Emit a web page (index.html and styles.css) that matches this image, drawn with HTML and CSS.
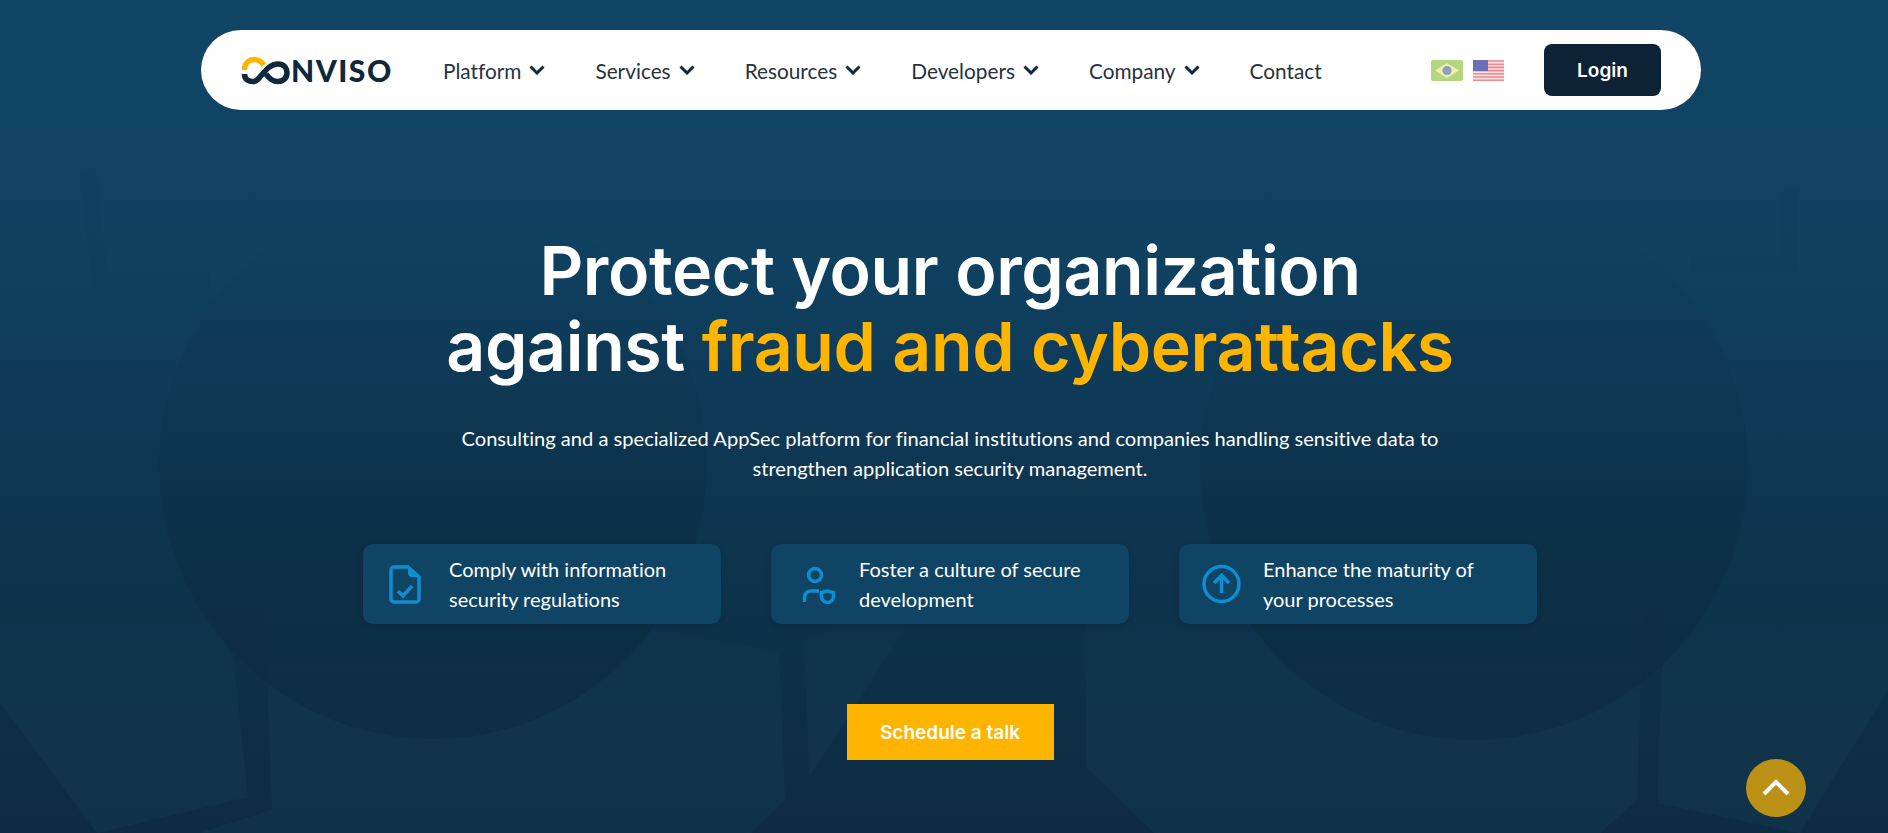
FILE: index.html
```html
<!DOCTYPE html>
<html>
<head>
    <title>Conviso</title>
    <link rel="stylesheet" href="styles.css">
</head>
<body>
    <section class="hero">
        <!-- faint infinity shape behind the hero -->
        <svg class="hero-bg" viewBox="0 0 1888 833" width="1888" height="833">
            <defs>
                <linearGradient id="fade" gradientUnits="userSpaceOnUse" x1="0" y1="190" x2="0" y2="740">
                    <stop offset="0" stop-color="#0b2a40" stop-opacity="0"/>
                    <stop offset="0.35" stop-color="#0b2a40" stop-opacity="0.14"/>
                    <stop offset="1" stop-color="#0b2a40" stop-opacity="0.62"/>
                </linearGradient>
                <linearGradient id="plate" gradientUnits="userSpaceOnUse" x1="0" y1="590" x2="0" y2="720">
                    <stop offset="0" stop-color="#153c54" stop-opacity="0"/>
                    <stop offset="1" stop-color="#153c54" stop-opacity="0.4"/>
                </linearGradient>
            </defs>
            <!-- lighter plates low on the page -->
            <g fill="url(#plate)">
                <path d="M0 590H194L233 657 248 797 97 833 0 703z"/>
                <path d="M264 590H645V627L779 652 785 800 751 833H200L272 810z"/>
                <path d="M805 640 930 590 809 777z"/>
                <path d="M1086 590H1644L1637 800 1600 833H1154L1086 767z"/>
                <path d="M1665 590H1888V690L1800 833 1657 803z"/>
            </g>
            <!-- faint frames near the top corners -->
            <g fill="none" stroke="#0b2a40" stroke-opacity="0.05" stroke-width="16">
                <path d="M88 170 100 280H210"/>
                <path d="M1790 190V265H1690"/>
            </g>
            <circle cx="433" cy="465" r="274" fill="url(#fade)"/>
            <circle cx="1474" cy="466" r="274" fill="url(#fade)"/>
        </svg>

        <header class="navbar">
            <a class="logo" href="#">
                <svg width="50" height="30" viewBox="0 0 50 30">
                    <path d="M3.500 15C3.500 7 9 4.500 13 4.500 17 4.500 20 6 23 10" fill="none" stroke="#ffb400" stroke-width="5.500"/>
                    <path d="M3.500 19C3.500 25 8 26.500 12 26.500 20 26.500 24 9 37 9 44 9 46 14 46 18 46 24 41 26.500 37 26.500 30 26.500 27 22 25 19" fill="none" stroke="#11283b" stroke-width="5.500"/>
                </svg>
                <span class="logo-text">nviso</span>
            </a>
            <nav class="menu">
                <a href="#">Platform <svg class="chev" viewBox="0 0 16 10"><path d="M1.500 1.500 8 8l6.500-6.500"/></svg></a>
                <a href="#">Services <svg class="chev" viewBox="0 0 16 10"><path d="M1.500 1.500 8 8l6.500-6.500"/></svg></a>
                <a href="#">Resources <svg class="chev" viewBox="0 0 16 10"><path d="M1.500 1.500 8 8l6.500-6.500"/></svg></a>
                <a href="#">Developers <svg class="chev" viewBox="0 0 16 10"><path d="M1.500 1.500 8 8l6.500-6.500"/></svg></a>
                <a href="#">Company <svg class="chev" viewBox="0 0 16 10"><path d="M1.500 1.500 8 8l6.500-6.500"/></svg></a>
                <a href="#">Contact</a>
            </nav>
            <div class="flags">
                <svg width="32" height="21" viewBox="0 0 32 21">
                    <rect width="32" height="21" rx="2" fill="#b2d77f"/>
                    <path d="M16 3 28 10.500 16 18 4 10.500z" fill="#f3ecb0"/>
                    <circle cx="16" cy="10.500" r="4.600" fill="#8fa0bd"/>
                </svg>
                <svg width="31" height="21" viewBox="0 0 31 21">
                    <rect width="31" height="21" fill="#fbe3e4"/>
                    <path d="M0 1h31M0 4.200h31M0 7.400h31M0 10.600h31M0 13.800h31M0 17h31M0 20.200h31" stroke="#f0878f" stroke-width="1.600"/>
                    <rect width="15" height="11" fill="#6b6fb5"/>
                </svg>
            </div>
            <a class="login" href="#">Login</a>
        </header>

        <div class="hero-body">
            <h1>Protect your organization<br>against <span class="accent">fraud and cyberattacks</span></h1>
            <p class="lead">Consulting and a specialized AppSec platform for financial institutions and companies handling sensitive data to strengthen application security management.</p>
            <div class="cards">
                <div class="card">
                    <svg class="card-icon" width="41" height="40" viewBox="0 0 41 40">
                        <path d="M8 3h14l11 10v22a3 3 0 0 1-3 3H8a3 3 0 0 1-3-3V6a3 3 0 0 1 3-3z"/>
                        <path class="solid" d="M22 2v7a4 4 0 0 0 4 4h8z"/>
                        <path d="M12 27l5 5 9-10"/>
                    </svg>
                    <span>Comply with information<br>security regulations</span>
                </div>
                <div class="card">
                    <svg class="card-icon" width="43" height="40" viewBox="0 0 43 40">
                        <circle cx="21" cy="11" r="6.500"/>
                        <path d="M10.500 38V33a6 6 0 0 1 6-6H25"/>
                        <path d="M27.500 28.500l6-1.500 6 1.500v4c0 3.500-3 5.500-6 6.500-3-1-6-3-6-6.500z"/>
                    </svg>
                    <span>Foster a culture of secure<br>development</span>
                </div>
                <div class="card">
                    <svg class="card-icon" width="39" height="40" viewBox="0 0 39 40">
                        <circle cx="19.500" cy="20" r="17.500"/>
                        <path d="M19.500 29V12M12 19l7.500-7.500L27 19"/>
                    </svg>
                    <span>Enhance the maturity of<br>your processes</span>
                </div>
            </div>
            <a class="cta" href="#">Schedule a talk</a>
        </div>

        <a class="to-top" href="#">
            <svg width="30" height="18" viewBox="0 0 30 18"><path d="M3 15 15 3l12 12"/></svg>
        </a>
    </section>
</body>
</html>
```

FILE: styles.css
```css
* {
    box-sizing: border-box;
}

body {
    margin: 0;
    font-family: Lato, "Open Sans", sans-serif;
    font-variant-ligatures: none;
    background: #0d2b40;
}

a {
    text-decoration: none;
}

.hero {
    position: relative;
    height: 833px;
    overflow: hidden;
    padding-top: 30px;
    background: linear-gradient(180deg, #0f4566 0%, #0f4161 30%, #0e3550 60%, #0d2c41 100%);
}

.hero-bg {
    position: absolute;
    top: 0;
    left: 0;
}

.navbar {
    position: relative;
    display: flex;
    align-items: center;
    width: 1500px;
    height: 80px;
    margin-left: 201px;
    padding: 0 40px;
    background: #fff;
    border-radius: 40px;
}

.logo {
    display: flex;
    align-items: center;
    width: 202px;
    color: #11283b;
}

.logo svg {
    flex: none;
}

.logo-text {
    font-size: 30px;
    font-weight: 900;
    letter-spacing: 1.500px;
    text-transform: uppercase;
}

.menu {
    display: flex;
    gap: 50px;
    font-size: 20.800px;
}

.menu a {
    display: flex;
    align-items: center;
    gap: 8px;
    color: #26333f;
}

.chev {
    width: 16px;
    height: 10px;
    fill: none;
    stroke: #11283b;
    stroke-width: 3;
}

.flags {
    display: flex;
    align-items: center;
    gap: 10px;
    margin-left: auto;
    margin-right: 40px;
}

.login {
    display: flex;
    align-items: center;
    justify-content: center;
    width: 117px;
    height: 52px;
    color: #fff;
    font-family: Inter, sans-serif;
    font-size: 19px;
    font-weight: 600;
    background: #0d2335;
    border-radius: 8px;
}

.hero-body {
    position: relative;
    display: flex;
    flex-direction: column;
    align-items: center;
    width: 1500px;
    margin-top: 122px;
    margin-left: 200px;
    color: #fff;
    text-align: center;
}

h1 {
    margin: 0;
    font-family: Inter, sans-serif;
    font-size: 68px;
    font-weight: 600;
    line-height: 76px;
    letter-spacing: -0.400px;
}

.accent {
    color: #ffb400;
}

.lead {
    width: 1000px;
    margin: 39px 0 0;
    font-size: 20.100px;
    line-height: 30px;
}

.cards {
    display: flex;
    gap: 50px;
    margin-top: 61px;
}

.card {
    display: flex;
    align-items: center;
    gap: 22px;
    width: 358px;
    height: 80px;
    padding-left: 23px;
    font-size: 20px;
    line-height: 30px;
    text-align: left;
    background: #0f4464;
    border-radius: 10px;
    box-shadow: 0 2px 6px rgba(0, 0, 0, 0.12);
}

.card-icon {
    flex: none;
    fill: none;
    stroke: #0e8ed0;
    stroke-width: 3.500;
}

.card-icon .solid {
    fill: #0e8ed0;
    stroke: none;
}

.cta {
    display: flex;
    align-items: center;
    justify-content: center;
    width: 207px;
    height: 56px;
    margin-top: 80px;
    color: #fff;
    font-family: Inter, sans-serif;
    font-size: 19px;
    font-weight: 600;
    background: #ffb400;
}

.to-top {
    position: absolute;
    top: 759px;
    left: 1746px;
    display: flex;
    align-items: center;
    justify-content: center;
    width: 60px;
    height: 58px;
    background: #bb9116;
    border-radius: 50%;
}

.to-top svg {
    fill: none;
    stroke: #fff;
    stroke-width: 4;
}
```
